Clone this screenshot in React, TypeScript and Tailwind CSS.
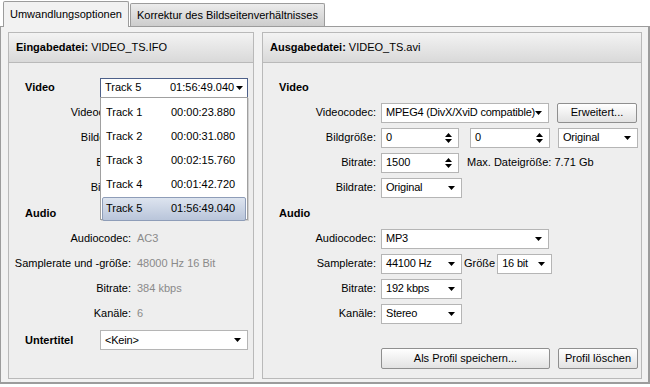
import type { ReactNode } from "react";

const Arrow = () => (
  <svg width="7" height="4" viewBox="0 0 7 4" className="shrink-0">
    <path d="M0 0h7L3.5 4z" fill="#000" />
  </svg>
);

const SpinArrows = () => (
  <div className="flex flex-col gap-[2px] shrink-0">
    <svg width="7" height="4" viewBox="0 0 7 4">
      <path d="M0 4h7L3.5 0z" fill="#000" />
    </svg>
    <svg width="7" height="4" viewBox="0 0 7 4">
      <path d="M0 0h7L3.5 4z" fill="#000" />
    </svg>
  </div>
);

function Combo({ value, className }: { value: string; className: string }) {
  return (
    <div
      className={`flex items-center justify-between h-[20px] bg-white border border-[#b5b5b5] pl-[4px] pr-[6px] ${className}`}
    >
      <span className="whitespace-nowrap tracking-[-0.2px]">{value}</span>
      <Arrow />
    </div>
  );
}

function Spin({ value, className }: { value: string; className: string }) {
  return (
    <div
      className={`flex items-center justify-between h-[20px] bg-white border border-[#b5b5b5] pl-[4px] pr-[6px] ${className}`}
    >
      <span>{value}</span>
      <SpinArrows />
    </div>
  );
}

function Btn({ label, className }: { label: string; className: string }) {
  return (
    <div
      className={`flex items-center justify-center h-[20px] rounded-[2px] border border-[#8f8f8f] bg-gradient-to-b from-white to-[#e2e2e2] ${className}`}
    >
      {label}
    </div>
  );
}

function Panel({
  title,
  file,
  className,
  children,
}: {
  title: string;
  file: string;
  className: string;
  children: ReactNode;
}) {
  return (
    <div className={`flex flex-col border border-[#b9b9b9] bg-[#eeeeee] ${className}`}>
      <div className="h-[30px] shrink-0 flex items-center pl-[7px] border-b border-[#b9b9b9] bg-gradient-to-b from-[#f3f3f3] to-[#d9d9d9]">
        <span className="font-bold">{title}</span>
        <span>&nbsp;{file}</span>
      </div>
      <div className="flex flex-col flex-1 pt-[12px]">{children}</div>
    </div>
  );
}

// left panel: read-only info rows
function InfoRow({ label, value }: { label: string; value?: string }) {
  return (
    <div className="flex items-center h-[25px]">
      <div className="w-[122px] text-right">{label}</div>
      {value && <div className="ml-[6px] text-[#8a8a8a]">{value}</div>}
    </div>
  );
}

// right panel: label + controls
function FormRow({ label, children }: { label: string; children: ReactNode }) {
  return (
    <div className="flex items-center h-[25px]">
      <div className="w-[113px] text-right">{label}</div>
      <div className="ml-[5px] flex items-center gap-[8px]">{children}</div>
    </div>
  );
}

const tracks = [
  ["Track 1", "00:00:23.880"],
  ["Track 2", "00:00:31.080"],
  ["Track 3", "00:02:15.760"],
  ["Track 4", "00:01:42.720"],
  ["Track 5", "01:56:49.040"],
];

export default function App() {
  return (
    <div className="w-[650px] h-[387px] bg-white text-black text-[11px] font-['Liberation_Sans',Arial,sans-serif] overflow-hidden">
      {/* tabs */}
      <div className="flex items-end h-[26px] pl-[3px]">
        <div className="relative z-10 h-[26px] -mb-px flex items-center px-[6px] border border-b-0 border-[#9c9c9c] bg-[#f2f2f2] rounded-t-[2px]">
          Umwandlungsoptionen
        </div>
        <div className="h-[23px] ml-px flex items-center px-[6px] border border-b-0 border-[#9c9c9c] bg-gradient-to-b from-[#ececec] to-[#cdcdcd] rounded-t-[2px]">
          Korrektur des Bildseitenverhältnisses
        </div>
      </div>

      {/* tab page */}
      <div className="w-[650px] h-[358px] border border-[#9c9c9c] border-r-2 border-b-2 bg-[#f2f2f2] flex gap-[8px] pt-[5px] pl-[7px]">
        <Panel title="Eingabedatei:" file="VIDEO_TS.IFO" className="w-[246px] h-[347px]">
          <div className="flex items-center h-[25px] pl-[16px]">
            <div className="w-[75px] font-bold">Video</div>
            <div className="relative">
              <div className="flex items-center h-[20px] w-[148px] bg-white border border-[#4d6089] pl-[4px] pr-[4px] overflow-hidden">
                <span className="w-[65px] shrink-0">Track 5</span>
                <span className="w-[66px] shrink-0 overflow-hidden whitespace-nowrap">01:56:49.040</span>
                <Arrow />
              </div>
              {/* open list */}
              <div className="absolute z-20 left-0 top-[19px] w-[148px] h-[123px] bg-white border border-[#a0a0a0] pt-[3px] px-px shadow-[1px_1px_0_#d0d0d0]">
                {tracks.map(([t, d], i) => (
                  <div
                    key={t}
                    className={`flex items-center h-[24px] pl-[3px] ${
                      i === 4
                        ? "rounded-[2px] border border-[#8e9db8] bg-gradient-to-b from-[#dde4ef] to-[#b9c5da]"
                        : "border border-transparent"
                    }`}
                  >
                    <span className="w-[65px]">{t}</span>
                    <span>{d}</span>
                  </div>
                ))}
              </div>
            </div>
          </div>
          <InfoRow label="Videocodec:" />
          <InfoRow label="Bildgröße:" />
          <InfoRow label="Bitrate:" />
          <InfoRow label="Bildrate:" />
          <div className="flex items-center h-[25px] mt-[1px] pl-[16px] font-bold">Audio</div>
          <InfoRow label="Audiocodec:" value="AC3" />
          <InfoRow label="Samplerate und -größe:" value="48000 Hz 16 Bit" />
          <InfoRow label="Bitrate:" value="384 kbps" />
          <InfoRow label="Kanäle:" value="6" />
          <div className="flex items-center h-[24px] mt-[2px] pl-[16px]">
            <div className="w-[75px] font-bold">Untertitel</div>
            <Combo value="<Kein>" className="w-[148px]" />
          </div>
        </Panel>

        <Panel title="Ausgabedatei:" file="VIDEO_TS.avi" className="w-[380px] h-[347px]">
          <div className="flex items-center h-[25px] pl-[16px] font-bold">Video</div>
          <FormRow label="Videocodec:">
            <Combo value="MPEG4 (DivX/XviD compatible)" className="w-[168px] pr-[5px]" />
            <Btn label="Erweitert..." className="w-[80px]" />
          </FormRow>
          <FormRow label="Bildgröße:">
            <Spin value="0" className="w-[78px]" />
            <Spin value="0" className="w-[80px] ml-[3px]" />
            <Combo value="Original" className="w-[80px]" />
          </FormRow>
          <FormRow label="Bitrate:">
            <Spin value="1500" className="w-[78px]" />
            <span>Max. Dateigröße: 7.71 Gb</span>
          </FormRow>
          <FormRow label="Bildrate:">
            <Combo value="Original" className="w-[81px]" />
          </FormRow>
          <div className="flex items-center h-[25px] mt-[1px] pl-[16px] font-bold">Audio</div>
          <FormRow label="Audiocodec:">
            <Combo value="MP3" className="w-[168px]" />
          </FormRow>
          <FormRow label="Samplerate:">
            <Combo value="44100 Hz" className="w-[81px]" />
            <span className="-ml-[6px]">Größe</span>
            <Combo value="16 bit" className="w-[55px] -ml-[6px]" />
          </FormRow>
          <FormRow label="Bitrate:">
            <Combo value="192 kbps" className="w-[81px]" />
          </FormRow>
          <FormRow label="Kanäle:">
            <Combo value="Stereo" className="w-[81px]" />
          </FormRow>
          <div className="flex items-center gap-[8px] mt-[22px] pl-[118px]">
            <Btn label="Als Profil speichern..." className="w-[169px] h-[21px]" />
            <Btn label="Profil löschen" className="w-[80px] h-[21px]" />
          </div>
        </Panel>
      </div>
    </div>
  );
}
